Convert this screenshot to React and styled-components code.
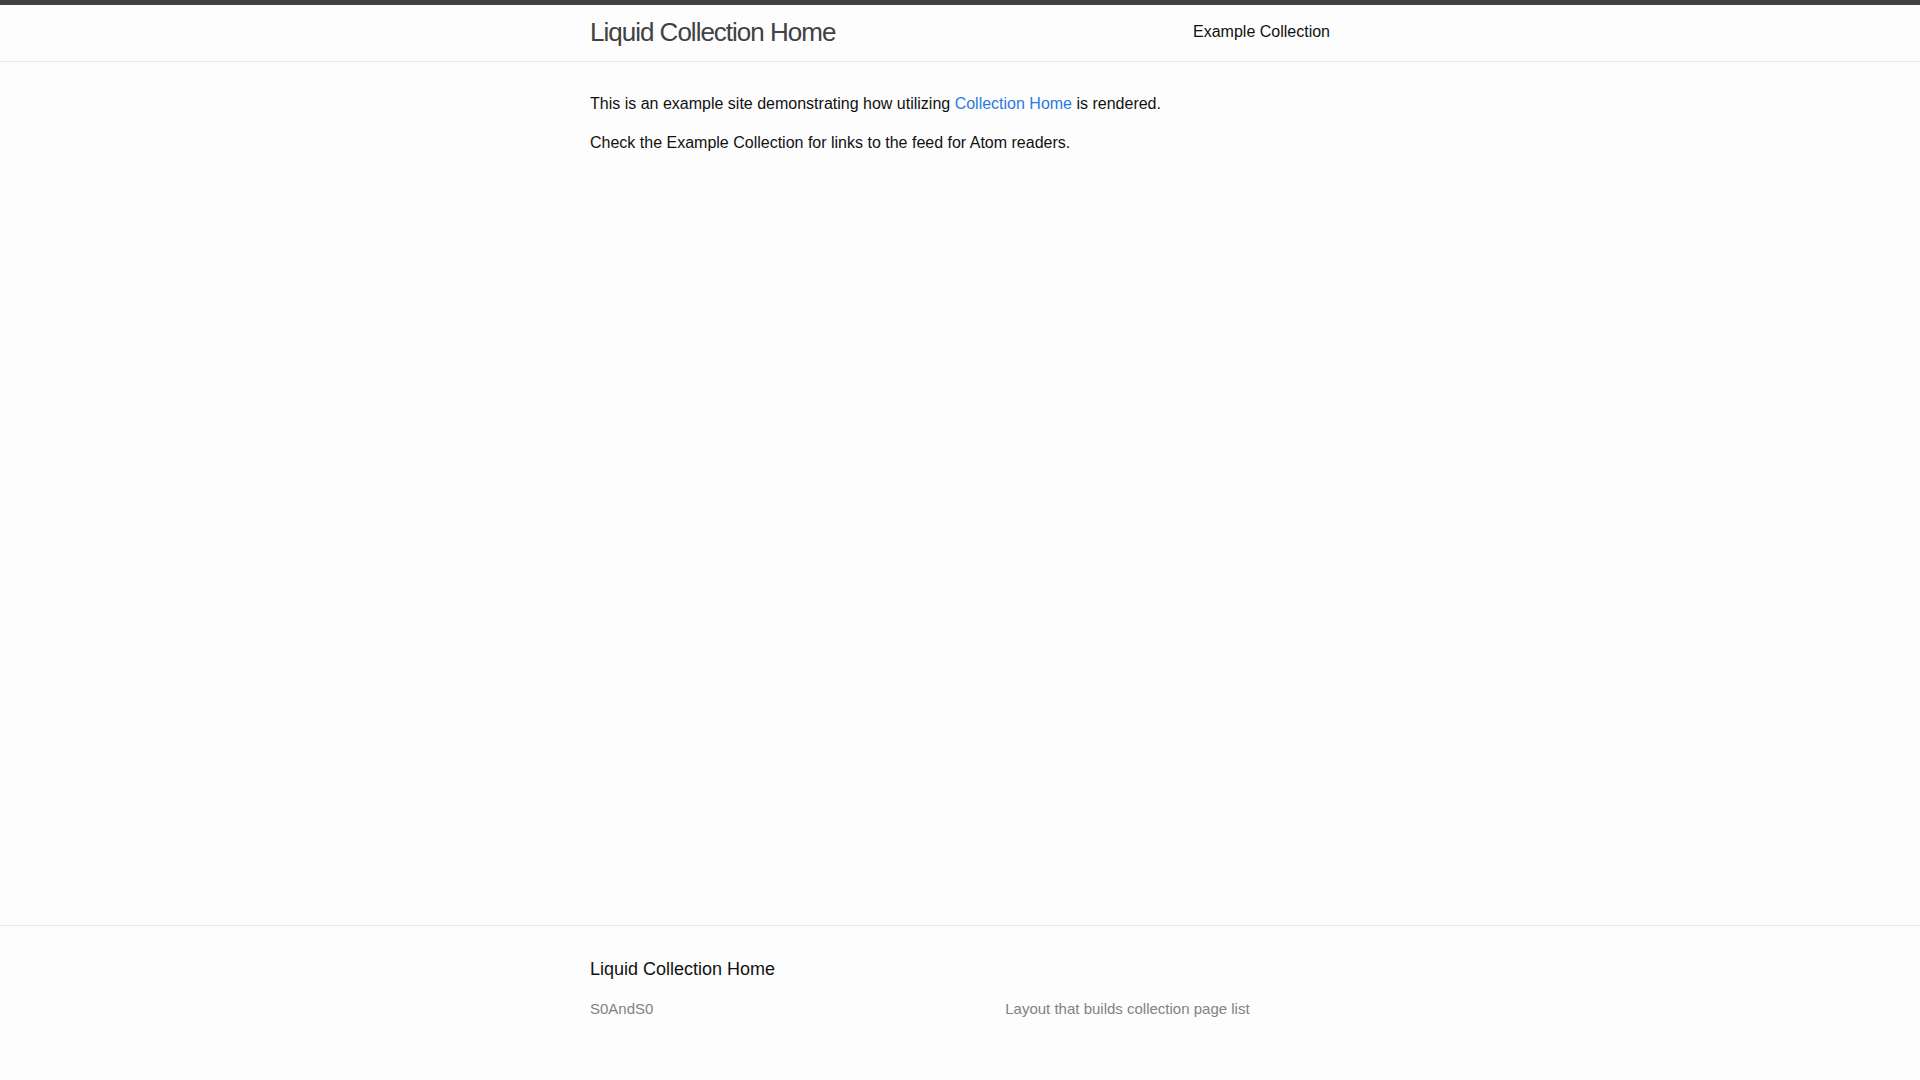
import React from "react";
import styled, { createGlobalStyle } from "styled-components";

const GlobalStyle = createGlobalStyle`
  html, body { margin: 0; padding: 0; }
  body {
    font: 400 16px/1.5 "Liberation Sans", Arial, Helvetica, sans-serif;
    color: #111111;
    background-color: #fdfdfd;
    -webkit-font-smoothing: antialiased;
  }
  #root { min-height: 100vh; display: flex; flex-direction: column; }
`;

const Page = styled.div`
  min-height: 100vh;
  display: flex;
  flex-direction: column;
`;

const Wrapper = styled.div`
  max-width: 740px;
  margin: 0 auto;
  padding: 0 30px;
  width: 100%;
  box-sizing: content-box;
`;

const Header = styled.header`
  border-top: 5px solid #424242;
  border-bottom: 1px solid #e8e8e8;
  min-height: 55.95px;
`;

const HeaderBar = styled(Wrapper)`
  display: flex;
  justify-content: space-between;
  align-items: flex-start;
`;

const SiteTitle = styled.a`
  font-size: 26px;
  font-weight: 300;
  line-height: 54px;
  letter-spacing: -1px;
  color: #424242;
  text-decoration: none;
`;

const Nav = styled.nav`
  line-height: 54px;
`;

const PageLink = styled.a`
  color: #111111;
  line-height: 1.5;
  text-decoration: none;
`;

const Main = styled.main`
  flex: 1;
  padding: 30px 0;
`;

const Para = styled.p`
  margin: 0 0 15px;
`;

const Link = styled.a`
  color: #2a7ae2;
  text-decoration: none;
`;

const Footer = styled.footer`
  border-top: 1px solid #e8e8e8;
  padding: 30px 0;
`;

const FooterHeading = styled.h2`
  font-size: 18px;
  font-weight: 400;
  line-height: 1.5;
  margin: 0 0 15px;
`;

const FooterCols = styled.div`
  display: flex;
  margin-left: -15px;
  font-size: 15px;
  color: #828282;
`;

const FooterCol = styled.div`
  box-sizing: content-box;
  width: calc(${(p) => p.$pct}% - 15px);
  padding-left: 15px;
  margin-bottom: 15px;
`;

const ContactList = styled.ul`
  list-style: none;
  margin: 0 0 15px;
  padding: 0;
`;

const FooterText = styled.p`
  margin: 0 0 15px;
`;

export default function App() {
  return (
    <>
      <GlobalStyle />
      <Page>
        <Header>
          <HeaderBar>
            <SiteTitle href="#">Liquid Collection Home</SiteTitle>
            <Nav>
              <PageLink href="#">Example Collection</PageLink>
            </Nav>
          </HeaderBar>
        </Header>
        <Main>
          <Wrapper>
            <Para>
              This is an example site demonstrating how utilizing{" "}
              <Link href="#">Collection Home</Link> is rendered.
            </Para>
            <Para>
              Check the Example Collection for links to the feed for Atom readers.
            </Para>
          </Wrapper>
        </Main>
        <Footer>
          <Wrapper>
            <FooterHeading>Liquid Collection Home</FooterHeading>
            <FooterCols>
              <FooterCol $pct={35}>
                <ContactList>
                  <li>S0AndS0</li>
                </ContactList>
              </FooterCol>
              <FooterCol $pct={20} />
              <FooterCol $pct={45}>
                <FooterText>Layout that builds collection page list</FooterText>
              </FooterCol>
            </FooterCols>
          </Wrapper>
        </Footer>
      </Page>
    </>
  );
}
